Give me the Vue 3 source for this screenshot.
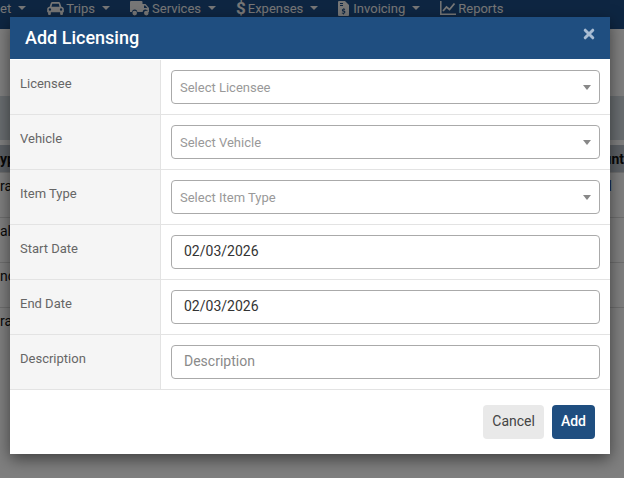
<template>
  <div class="page">
    <nav class="topnav">
      <span class="nav-item nav-cut">et <i class="caret"></i></span>
      <span class="nav-item">
        <svg class="nav-icon" width="17" height="13" viewBox="0 0 18 14"><path fill="currentColor" d="M4 1.200C4.300.5 4.900 0 5.700 0h6.600c.8 0 1.400.5 1.700 1.200L15.300 5c1.500.3 2.700 1.100 2.700 2.500V11h-1v2a1 1 0 0 1-1 1h-1a1 1 0 0 1-1-1v-2H4v2a1 1 0 0 1-1 1H2a1 1 0 0 1-1-1v-2H0V7.500C0 6.100 1.200 5.300 2.700 5L4 1.200zM5.500 2 4.700 5h8.600l-.8-3h-7zM3 6.800a1.300 1.300 0 1 0 0 2.600 1.300 1.300 0 0 0 0-2.600zm12 0a1.300 1.300 0 1 0 0 2.600 1.300 1.300 0 0 0 0-2.600z"/></svg>
        Trips <i class="caret"></i>
      </span>
      <span class="nav-item">
        <svg class="nav-icon" width="20" height="15" viewBox="0 0 20 15"><path fill="currentColor" d="M1 0h10.500a1 1 0 0 1 1 1v2h3l3.500 4v4h-1.100a2.600 2.600 0 0 0-5.200 0H7.300a2.600 2.600 0 0 0-5.200 0H0V1a1 1 0 0 1 1-1zm13 4.500V7h3.300l-2.200-2.500H14zM4.700 9.800a2.300 2.300 0 1 1 0 4.600 2.300 2.300 0 0 1 0-4.600zm11.600 0a2.300 2.300 0 1 1 0 4.600 2.300 2.300 0 0 1 0-4.600z"/></svg>
        Services <i class="caret"></i>
      </span>
      <span class="nav-item">
        <b class="dollar">$</b>
        Expenses <i class="caret"></i>
      </span>
      <span class="nav-item">
        <svg class="nav-icon nav-icon--doc" width="11" height="15" viewBox="0 0 11 15"><path fill="currentColor" fill-rule="evenodd" d="M1 0h6l4 4v10a1 1 0 0 1-1 1H1a1 1 0 0 1-1-1V1a1 1 0 0 1 1-1zm1 2v1h3V2H2zm0 2v1h3V4H2zm3.500 3v.8c-1 .1-1.600.7-1.600 1.500 0 1.800 2.300 1.200 2.300 2 0 .3-.4.500-.9.500-.5 0-.9-.1-1.300-.4l-.3.9c.4.200.8.400 1.300.4v.8h.8v-.8c1-.1 1.600-.8 1.600-1.600 0-1.800-2.300-1.200-2.300-2 0-.3.300-.4.700-.4.400 0 .8.100 1.100.3l.3-.9c-.3-.2-.7-.3-1.100-.3V7h-.6z"/></svg>
        Invoicing <i class="caret"></i>
      </span>
      <span class="nav-item">
        <svg class="nav-icon" width="16" height="14" viewBox="0 0 16 14"><path fill="none" stroke="currentColor" stroke-width="1.500" d="M.8 0v13.200H16"/><path fill="none" stroke="currentColor" stroke-width="1.800" d="M3 10l3.500-4 3 2.500L14.500 2.500"/></svg>
        Reports
      </span>
    </nav>

    <div class="backdrop-page">
      <div class="band"></div>
      <div class="table-head">
        <span>yp</span>
        <span>unt</span>
      </div>
      <div class="row-cut">rat<span class="row-link">l</span></div>
      <div class="row-cut">al</div>
      <div class="row-cut">nc</div>
      <div class="row-cut">ra</div>
    </div>

    <div class="overlay"></div>

    <div class="modal">
      <header class="modal-head">
        <h4>Add Licensing</h4>
        <svg class="close" width="12" height="12" viewBox="0 0 12 12"><path fill="none" stroke="currentColor" stroke-width="3" stroke-linecap="round" d="M2.200 2.200l7.600 7.600M9.800 2.200l-7.600 7.600"/></svg>
      </header>
      <div class="form-rows">
        <div v-for="row in rows" :key="row.label" class="form-row">
          <label class="form-label">{{ row.label }}</label>
          <div class="form-field">
            <div v-if="row.type === 'select'" class="select-box">
              <span>{{ row.placeholder }}</span>
              <i class="select-caret"></i>
            </div>
            <div v-else class="text-box" :class="{ 'is-empty': !row.value }">
              {{ row.value || row.placeholder }}
            </div>
          </div>
        </div>
      </div>
      <footer class="modal-foot">
        <button class="btn btn-cancel">Cancel</button>
        <button class="btn btn-add">Add</button>
      </footer>
    </div>
  </div>
</template>

<script setup>
const rows = [
  { label: 'Licensee', type: 'select', placeholder: 'Select Licensee' },
  { label: 'Vehicle', type: 'select', placeholder: 'Select Vehicle' },
  { label: 'Item Type', type: 'select', placeholder: 'Select Item Type' },
  { label: 'Start Date', type: 'text', value: '02/03/2026' },
  { label: 'End Date', type: 'text', value: '02/03/2026' },
  { label: 'Description', type: 'text', placeholder: 'Description' }
]
</script>

<style>
html,
body {
  margin: 0;
  background: #7b7b7b;
}
</style>

<style scoped>
.page {
  position: relative;
  width: 624px;
  height: 478px;
  overflow: hidden;
  background: #fff;
  font-family: Roboto, "Liberation Sans", sans-serif;
}

.topnav {
  display: flex;
  align-items: center;
  height: 29px;
  padding-bottom: 13px;
  box-sizing: border-box;
  background: #1c4c84;
  color: #eee;
  font-size: 13px;
  white-space: nowrap;
}

.nav-item {
  display: inline-flex;
  align-items: center;
  gap: 2px;
  margin-right: 20px;
}

.nav-cut {
  margin-right: 21px;
}

.nav-icon--doc {
  margin-right: 2px;
}

.caret {
  width: 0;
  height: 0;
  margin-left: 5px;
  border-left: 4px solid transparent;
  border-right: 4px solid transparent;
  border-top: 4px solid currentColor;
}

.dollar {
  font-size: 17px;
  font-weight: 700;
}

.backdrop-page {
  font-size: 14px;
  color: #111;
}

.band {
  height: 67px;
  margin-bottom: 5px;
  background: #fff;
  border-bottom: 44px solid #d3dae1;
}

.table-head {
  display: flex;
  justify-content: space-between;
  align-items: center;
  height: 27px;
  background: #b9c0cb;
  font-weight: 700;
}

.row-cut {
  display: flex;
  justify-content: space-between;
  height: 45px;
  padding-top: 5px;
  box-sizing: border-box;
  border-top: 1px solid #ddd;
}

.row-link {
  margin-right: 12px;
  color: #1c4c9c;
}

.overlay {
  position: absolute;
  inset: 0;
  background: rgba(0, 0, 0, 0.5);
}

.modal {
  position: absolute;
  top: 17px;
  left: 10px;
  width: 600px;
  height: 437px;
  display: flex;
  flex-direction: column;
  background: #fff;
  box-shadow: 0 5px 15px rgba(0, 0, 0, 0.5);
}

.modal-head {
  display: flex;
  justify-content: space-between;
  height: 42px;
  padding: 0 15px;
  background: #1f4e80;
  color: #fff;
}

.modal-head h4 {
  margin: 0;
  font-size: 18px;
  font-weight: 500;
  line-height: 42px;
}

.close {
  margin-top: 11px;
  color: #a8bcd3;
}

.form-rows {
  padding-top: 1px;
}

.form-row {
  display: grid;
  grid-template-columns: 151px 1fr;
  height: 55px;
  border-bottom: 1px solid #e3e3e3;
  box-sizing: border-box;
}

.form-label {
  padding: 16px 0 0 10px;
  background: #f5f5f5;
  border-right: 1px solid #e3e3e3;
  font-size: 13px;
  color: #666;
}

.form-field {
  padding: 10px 10px 0;
}

.select-box,
.text-box {
  display: flex;
  align-items: center;
  justify-content: space-between;
  height: 34px;
  box-sizing: border-box;
  border: 1px solid #aaa;
  border-radius: 4px;
  background: #fff;
}

.select-box {
  padding: 0 8px;
  font-size: 13px;
  color: #999;
}

.select-caret {
  width: 0;
  height: 0;
  border-left: 4px solid transparent;
  border-right: 4px solid transparent;
  border-top: 5px solid #888;
}

.text-box {
  padding: 0 12px 2px;
  font-size: 14px;
  color: #333;
}

.text-box.is-empty {
  color: #8a8a8a;
}

.modal-foot {
  display: flex;
  justify-content: flex-end;
  gap: 8px;
  padding: 15px 15px 0;
}

.btn {
  height: 34px;
  padding: 0 9px 2px;
  border: none;
  border-radius: 4px;
  font-family: inherit;
  font-size: 14px;
}

.btn-cancel {
  background: #e9e9e9;
  color: #444;
}

.btn-add {
  background: #1f4e80;
  color: #fff;
  font-weight: 500;
}
</style>
